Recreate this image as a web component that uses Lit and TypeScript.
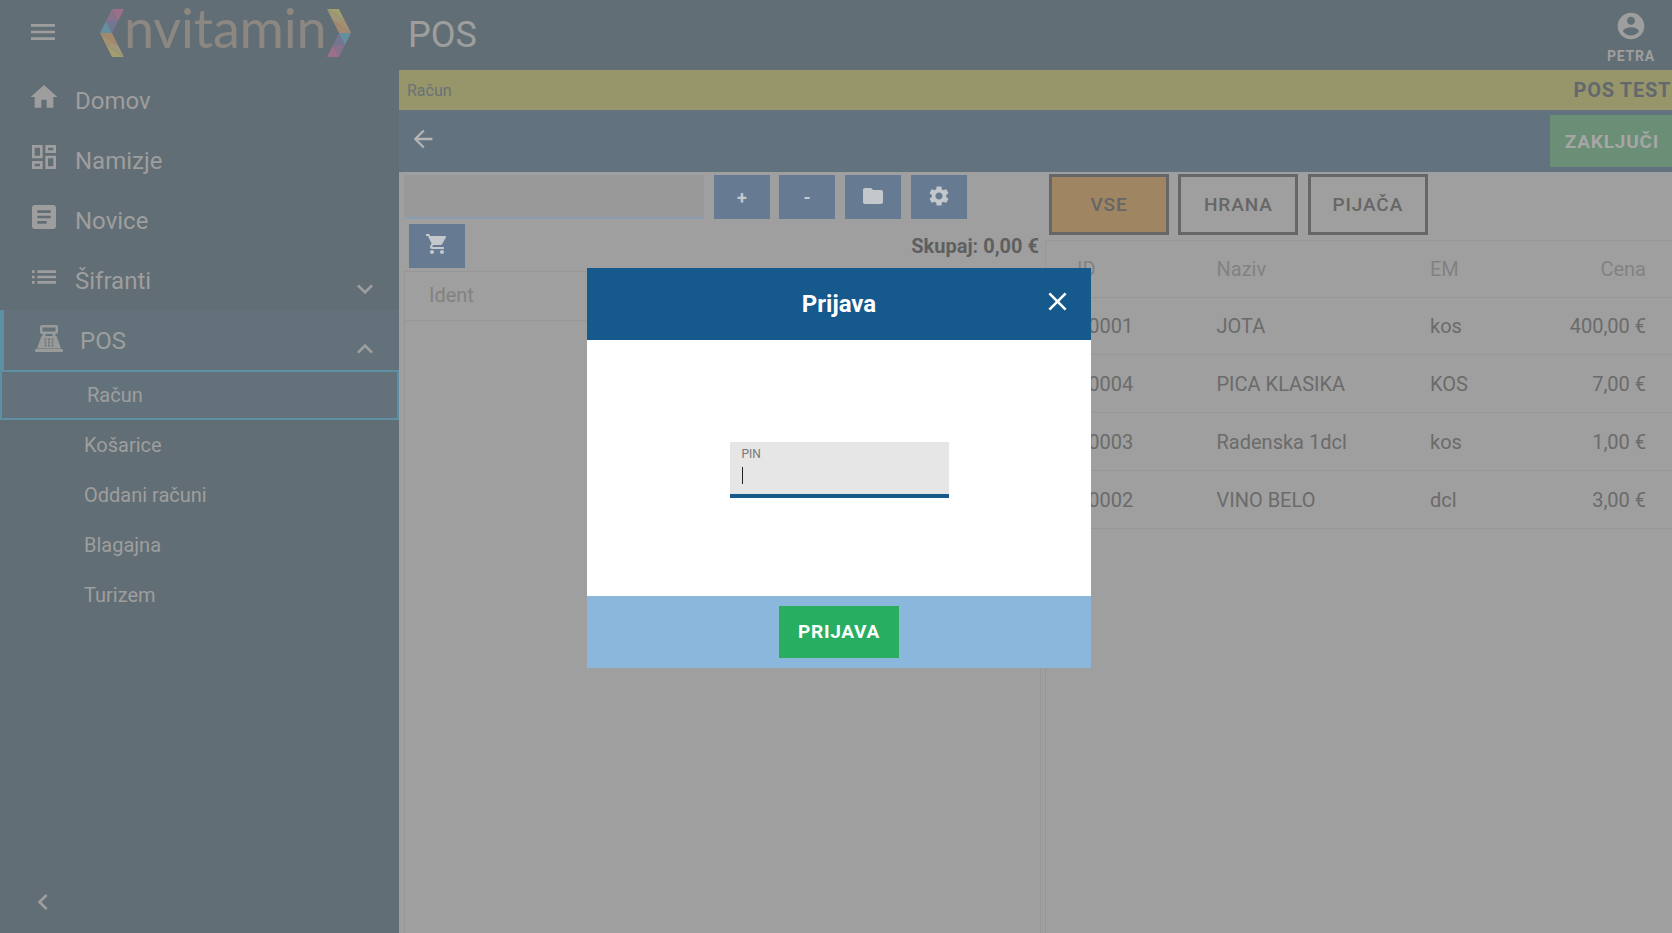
import { LitElement, html, css, svg } from "lit";
import { customElement } from "lit/decorators.js";

const P: Record<string, string> = {
  menu: "M3 18h18v-2H3v2zm0-5h18v-2H3v2zm0-7v2h18V6H3z",
  home: "M10 20v-6h4v6h5v-8h3L12 3 2 12h3v8z",
  dash: "M19 5v2h-4V5h4M9 5v6H5V5h4m10 8v6h-4v-6h4M9 17v2H5v-2h4M21 3h-8v6h8V3zM11 3H3v10h8V3zm10 8h-8v10h8V11zm-10 4H3v6h8v-6z",
  news: "M19 3H5c-1.1 0-2 .9-2 2v14c0 1.1.9 2 2 2h14c1.1 0 2-.9 2-2V5c0-1.1-.9-2-2-2zm-5 14H7v-2h7v2zm3-4H7v-2h10v2zm0-4H7V7h10v2z",
  list: "M3 13h2v-2H3v2zm0 4h2v-2H3v2zm0-8h2V7H3v2zm4 4h14v-2H7v2zm0 4h14v-2H7v2zM7 7v2h14V7H7z",
  down: "M16.59 8.59L12 13.17 7.41 8.59 6 10l6 6 6-6z",
  up: "M12 8l-6 6 1.41 1.41L12 10.83l4.59 4.58L18 14z",
  left: "M15.41 7.41L14 6l-6 6 6 6 1.41-1.41L10.83 12z",
  back: "M20 11H7.83l5.59-5.59L12 4l-8 8 8 8 1.41-1.41L7.83 13H20v-2z",
  cart: "M7 18c-1.1 0-1.99.9-1.99 2S5.9 22 7 22s2-.9 2-2-.9-2-2-2zM1 2v2h2l3.6 7.59-1.35 2.45c-.16.28-.25.61-.25.96 0 1.1.9 2 2 2h12v-2H7.42c-.14 0-.25-.11-.25-.25l.03-.12.9-1.63h7.45c.75 0 1.41-.41 1.75-1.03l3.58-6.49c.08-.14.12-.31.12-.48 0-.55-.45-1-1-1H5.21l-.94-2H1zm16 16c-1.1 0-1.99.9-1.99 2s.89 2 1.99 2 2-.9 2-2-.9-2-2-2z",
  folder: "M10 4H4c-1.1 0-1.99.9-1.99 2L2 18c0 1.1.9 2 2 2h16c1.1 0 2-.9 2-2V8c0-1.1-.9-2-2-2h-8l-2-2z",
  gear: "M19.14 12.94c.04-.3.06-.61.06-.94 0-.32-.02-.64-.07-.94l2.03-1.58c.18-.14.23-.41.12-.61l-1.92-3.32c-.12-.22-.37-.29-.59-.22l-2.39.96c-.5-.38-1.03-.7-1.62-.94l-.36-2.54c-.04-.24-.24-.41-.48-.41h-3.84c-.24 0-.43.17-.47.41l-.36 2.54c-.59.24-1.13.57-1.62.94l-2.39-.96c-.22-.08-.47 0-.59.22L2.74 8.87c-.12.21-.08.47.12.61l2.03 1.58c-.05.3-.09.63-.09.94s.02.64.07.94l-2.03 1.58c-.18.14-.23.41-.12.61l1.92 3.32c.12.22.37.29.59.22l2.39-.96c.5.38 1.03.7 1.62.94l.36 2.54c.05.24.24.41.48.41h3.84c.24 0 .44-.17.47-.41l.36-2.54c.59-.24 1.13-.56 1.62-.94l2.39.96c.22.08.47 0 .59-.22l1.92-3.32c.12-.22.07-.47-.12-.61l-2.01-1.58zM12 15.6c-1.98 0-3.6-1.62-3.6-3.6s1.62-3.6 3.6-3.6 3.6 1.62 3.6 3.6-1.62 3.6-3.6 3.6z",
  user: "M12 2C6.48 2 2 6.48 2 12s4.48 10 10 10 10-4.48 10-10S17.52 2 12 2zm0 3c1.66 0 3 1.34 3 3s-1.34 3-3 3-3-1.34-3-3 1.34-3 3-3zm0 14.2c-2.5 0-4.71-1.28-6-3.22.03-1.99 4-3.08 6-3.08 1.99 0 5.97 1.09 6 3.08-1.29 1.94-3.5 3.22-6 3.22z",
  close: "M19 6.41L17.59 5 12 10.59 6.41 5 5 6.41 10.59 12 5 17.59 6.41 19 12 13.41 17.59 19 19 17.59 13.41 12z",
};

const ic = (n: string, cls = "") =>
  html`<svg class="ic ${cls}" viewBox="0 0 24 24" fill="currentColor"><path d=${P[n]}></path></svg>`;

const holes = [9.5, 13, 16.5].flatMap((x) =>
  [13.5, 16.5, 19.5].map((y) => svg`<rect x=${x} y=${y} width="2" height="2" fill="#6f7a80"></rect>`)
);

const register = html`<svg class="reg" viewBox="0 0 28 27" fill="#9a9a9a">
  <path fill-rule="evenodd" d="M7 0h14a2 2 0 0 1 2 2v5a2 2 0 0 1-2 2H7a2 2 0 0 1-2-2V2a2 2 0 0 1 2-2zM7.500 2.500v4h13v-4z"></path>
  <path d="M7.500 9h3v2h-3zM17.500 9h3v2h-3z"></path>
  <path d="M6.500 11h15l4.500 12.500H2z"></path>
  ${holes}
  <path d="M1 24h26a1 1 0 0 1 1 1v1a1 1 0 0 1-1 1H1a1 1 0 0 1-1-1v-1a1 1 0 0 1 1-1z"></path>
</svg>`;

const tri = (pts: string, c: string) => svg`<polygon points=${pts} fill=${c}></polygon>`;
const chevron = (flip: boolean) => html`<svg class="chev" viewBox="0 0 24 48">
  <g transform=${flip ? "translate(24 48) rotate(180)" : ""}>
    ${tri("12,0 24,0 18,12", "#9c7089")}
    ${tri("12,0 6,12 18,12", "#87728c")}
    ${tri("6,12 18,12 12,24", "#747590")}
    ${tri("6,12 0,24 12,24", "#638f9f")}
    ${tri("0,24 12,24 18,36", "#a38a6f")}
    ${tri("0,24 6,36 18,36", "#a68e70")}
    ${tri("6,36 18,36 24,48", "#9e9779")}
    ${tri("6,36 12,48 24,48", "#a09d6e")}
  </g>
</svg>`;

const rows = [
  ["00001", "JOTA", "kos", "400,00 €"],
  ["00004", "PICA KLASIKA", "KOS", "7,00 €"],
  ["00003", "Radenska 1dcl", "kos", "1,00 €"],
  ["00002", "VINO BELO", "dcl", "3,00 €"],
];

@customElement("app-root")
export class AppRoot extends LitElement {
  static styles = css`
    :host { display: block; width: 1672px; height: 933px; overflow: hidden; position: relative;
      font-family: Roboto, "Liberation Sans", sans-serif; background: #9f9f9f; color: #666; }
    .ic { display: block; flex: none; }
    .top { height: 70px; background: #626e75; display: flex; align-items: center; color: #9e9e9e; }
    .burger { width: 32px; height: 32px; margin-left: 27px; margin-top: -6px; }
    .logo { display: flex; align-items: center; margin-left: 41px; width: 250px; margin-top: -4px; }
    .chev { width: 24px; height: 48px; flex: none; }
    .logo-t { font-family: Lato, sans-serif; font-size: 54px; line-height: 40px; color: #8c8881; flex: 1; text-align: center; margin-top: -10px; letter-spacing: -.2px; }
    .title { font-size: 36px; margin-left: 58px; margin-top: 0; }
    .user { margin-left: auto; width: 70px; margin-right: 6px; margin-top: 6px; display: flex; flex-direction: column; align-items: center; }
    .user .ic { width: 32px; height: 32px; margin-top: -2px; }
    .user span { font-size: 14px; font-weight: 700; letter-spacing: .8px; margin-top: 6px; }
    .body { display: flex; height: 863px; }
    .side { width: 399px; flex: none; background: #626e75; color: #9e9e9e; display: flex; flex-direction: column; }
    .item { height: 60px; display: flex; align-items: center; font-size: 24px; padding: 2px 0 0 28px; position: relative; box-sizing: border-box; }
    .item > .ic:first-child { width: 32px; height: 32px; margin-right: 15px; margin-top: -8px; }
    .item .arrow { width: 32px; height: 32px; position: absolute; right: 18px; top: 23px; }
    .item.pos { background: #63727a; border-left: 4px solid #5f8fa3; padding-left: 31px; }
    .reg { width: 28px; height: 27px; margin-right: 17px; margin-top: -6px; flex: none; }
    .sub { height: 50px; display: flex; align-items: center; font-size: 20px; padding-left: 84px; box-sizing: border-box; }
    .sub.act { border: 2.500px solid #5f8fa3; padding-left: 85px; background: #63727a; }
    .collapse { margin-top: auto; padding: 0 0 15px 27px; }
    .collapse .ic { width: 32px; height: 32px; }
    .main { flex: 1; display: flex; flex-direction: column; min-width: 0; }
    .yellow { height: 40px; background: #96966a; display: flex; align-items: center; justify-content: space-between; padding: 0 1px 0 8px; color: #6b7178; font-size: 16px; }
    .yellow b { font-size: 20px; font-weight: 700; letter-spacing: .7px; color: #62686e; }
    .blue { height: 62px; background: #62737f; display: flex; align-items: center; justify-content: space-between; color: #a6a6a6; padding-left: 10px; }
    .blue .ic { width: 28px; height: 28px; color: #b5b5b5; margin-top: -4px; }
    .zak { width: 122px; height: 52px; background: #6b8e76; color: #a6a6a6; display: flex; align-items: center; justify-content: center; font-size: 19px; font-weight: 700; letter-spacing: .8px; margin-top: -1px; padding: 1px 0 0 2px; box-sizing: border-box; }
    .work { flex: 1; display: flex; min-height: 0; }
    .lp { width: 642px; flex: none; padding: 3px 0 0 5px; box-sizing: border-box; }
    .bar { display: flex; gap: 10px; }
    .bar .btn:nth-child(3) { margin-left: -1px; }
    .field { width: 300px; height: 44px; background: #999; border-bottom: 2px solid #8a9db0; box-sizing: border-box; }
    .btn { width: 56px; height: 44px; background: #667b92; color: #c4c8cc; display: flex; align-items: center; justify-content: center; font-size: 18px; font-weight: 700; }
    .btn .ic { width: 24px; height: 24px; margin-top: -3px; }
    .sum { display: flex; justify-content: space-between; align-items: center; margin-top: 5px; padding-left: 5px; height: 44px; }
    .sum b { font-size: 20px; font-weight: 700; color: #5f5f5f; margin-right: 2px; }
    .sum .btn .ic { margin-top: -4px; }
    .ltable { margin-top: 3px; border-left: 1px solid #979797; border-right: 1px solid #979797; height: 700px; }
    .lhead { height: 50px; border-top: 1px solid #979797; border-bottom: 1px solid #979797; box-sizing: border-box; padding: 0 0 2px 24px; display: flex; align-items: center; font-size: 20px; color: #828282; }
    .rp { flex: 1; padding: 2px 0 0 8px; min-width: 0; }
    .cats { display: flex; gap: 9.400px; height: 61px; }
    .cat { width: 120px; height: 61px; box-sizing: border-box; border: 3px solid #666; display: flex; align-items: center; justify-content: center; font-size: 19px; font-weight: 500; letter-spacing: .9px; color: #666; }
    .cat.on { background: #a08562; }
    .rtable { margin: 5px 0 0 -4px; border-left: 1px solid #979797; height: 700px; font-size: 20px; }
    .r { display: grid; grid-template-columns: 139.500px 213.500px 1fr auto; align-items: center; height: 58px; padding: 0 26px 0 31px; border-bottom: 1px solid #979797; box-sizing: border-box; color: #6b6b6b; }
    .r.h { color: #828282; border-top: 1px solid #979797; }
    .r.h + .r { height: 57px; }
    .modal { position: absolute; left: 587px; top: 268px; width: 504px; height: 400px; background: #fff; display: flex; flex-direction: column; }
    .mh { height: 72px; background: #15598d; color: #fff; display: flex; align-items: center; justify-content: center; font-size: 24px; font-weight: 700; position: relative; }
    .mh .ic { position: absolute; width: 31px; height: 31px; left: 455px; top: 18px; }
    .mb { flex: 1; display: flex; align-items: center; justify-content: center; }
    .inp { width: 219px; height: 56px; background: #e6e6e6; border-bottom: 4px solid #15598d; box-sizing: border-box; padding: 5px 12px 0; margin-top: 4px; }
    .inp label { display: block; font-size: 12px; line-height: 14px; color: #777; }
    .caret { width: 1px; height: 17px; background: #222; margin-top: 6px; }
    .mf { height: 72px; background: #8cb7dd; display: flex; align-items: center; justify-content: center; }
    .go { width: 120px; height: 52px; background: #27ae60; color: #fff; display: flex; align-items: center; justify-content: center; font-size: 19px; font-weight: 700; letter-spacing: .7px; padding-bottom: 2px; box-sizing: border-box; }
  `;

  render() {
    return html`
      <div class="top">
        ${ic("menu", "burger")}
        <div class="logo">${chevron(false)}<span class="logo-t">nvitamin</span>${chevron(true)}</div>
        <div class="title">POS</div>
        <div class="user">${ic("user")}<span>PETRA</span></div>
      </div>
      <div class="body">
        <nav class="side">
          <div class="item">${ic("home")}Domov</div>
          <div class="item">${ic("dash")}Namizje</div>
          <div class="item">${ic("news")}Novice</div>
          <div class="item">${ic("list")}Šifranti${ic("down", "arrow")}</div>
          <div class="item pos">${register}POS${ic("up", "arrow")}</div>
          <div class="sub act">Račun</div>
          <div class="sub">Košarice</div>
          <div class="sub">Oddani računi</div>
          <div class="sub">Blagajna</div>
          <div class="sub">Turizem</div>
          <div class="collapse">${ic("left")}</div>
        </nav>
        <main class="main">
          <div class="yellow"><span>Račun</span><b>POS TEST</b></div>
          <div class="blue">${ic("back")}<div class="zak">ZAKLJUČI</div></div>
          <div class="work">
            <section class="lp">
              <div class="bar">
                <div class="field"></div>
                <div class="btn">+</div>
                <div class="btn">-</div>
                <div class="btn">${ic("folder")}</div>
                <div class="btn">${ic("gear")}</div>
              </div>
              <div class="sum">
                <div class="btn">${ic("cart")}</div>
                <b>Skupaj: 0,00 €</b>
              </div>
              <div class="ltable"><div class="lhead">Ident</div></div>
            </section>
            <section class="rp">
              <div class="cats">
                <div class="cat on">VSE</div>
                <div class="cat">HRANA</div>
                <div class="cat">PIJAČA</div>
              </div>
              <div class="rtable">
                <div class="r h"><span>ID</span><span>Naziv</span><span>EM</span><span>Cena</span></div>
                ${rows.map(
                  (r) => html`<div class="r"><span>${r[0]}</span><span>${r[1]}</span><span>${r[2]}</span><span>${r[3]}</span></div>`
                )}
              </div>
            </section>
          </div>
        </main>
      </div>
      <div class="modal">
        <div class="mh">Prijava${ic("close")}</div>
        <div class="mb">
          <div class="inp"><label>PIN</label><div class="caret"></div></div>
        </div>
        <div class="mf"><div class="go">PRIJAVA</div></div>
      </div>
    `;
  }
}
